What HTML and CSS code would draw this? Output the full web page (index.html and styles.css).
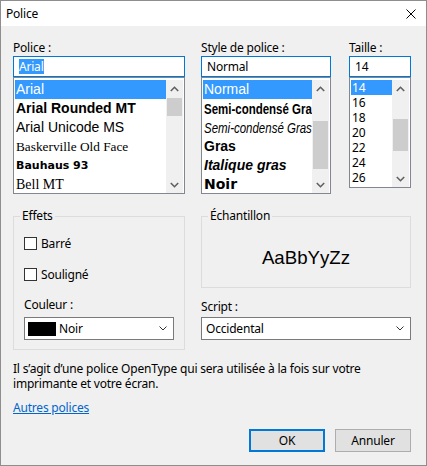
FILE: index.html
```html
<!DOCTYPE html>
<html lang="fr">
<head>
<meta charset="utf-8">
<title>Police</title>
<link rel="stylesheet" href="styles.css">
</head>
<body>
<div class="window">
  <div class="titlebar">
    <span class="title">Police</span>
    <svg class="close" width="10" height="10" viewBox="0 0 10 10"><path d="M0.5 0.5L9.5 9.5M9.5 0.5L0.5 9.5" stroke="#000" stroke-width="1" fill="none"/></svg>
  </div>
  <div class="content">
    <div class="pickers">
      <div class="col col-font">
        <div class="label">Police :</div>
        <div class="edit"><span class="sel">Arial</span></div>
        <div class="list list-font">
          <div class="items">
            <div class="item selected f-arial">Arial</div>
            <div class="item f-arial-bold">Arial Rounded MT</div>
            <div class="item f-arial">Arial Unicode MS</div>
            <div class="item f-bask">Baskerville Old Face</div>
            <div class="item f-bauhaus">Bauhaus 93</div>
            <div class="item f-bell">Bell MT</div>
          </div>
          <div class="scrollbar">
            <div class="sb-btn"><svg width="9" height="6" viewBox="0 0 9 6"><polyline points="0.8,5 4.5,1.3 8.2,5" fill="none" stroke="#606060" stroke-width="1.6"/></svg></div>
            <div class="sb-track"><div class="thumb thumb-font"></div></div>
            <div class="sb-btn"><svg width="9" height="6" viewBox="0 0 9 6"><polyline points="0.8,1 4.5,4.7 8.2,1" fill="none" stroke="#606060" stroke-width="1.6"/></svg></div>
          </div>
        </div>
      </div>
      <div class="col col-style">
        <div class="label">Style de police :</div>
        <div class="edit">Normal</div>
        <div class="list list-font">
          <div class="items">
            <div class="item selected f-arial">Normal</div>
            <div class="item"><span class="narrow f-narrow-bold">Semi-condensé Gras</span></div>
            <div class="item"><span class="narrow f-narrow-italic">Semi-condensé Gras</span></div>
            <div class="item f-arial-bold">Gras</div>
            <div class="item f-arial-bold-italic">Italique gras</div>
            <div class="item f-black">Noir</div>
          </div>
          <div class="scrollbar">
            <div class="sb-btn"><svg width="9" height="6" viewBox="0 0 9 6"><polyline points="0.8,5 4.5,1.3 8.2,5" fill="none" stroke="#606060" stroke-width="1.6"/></svg></div>
            <div class="sb-track"><div class="thumb thumb-style"></div></div>
            <div class="sb-btn"><svg width="9" height="6" viewBox="0 0 9 6"><polyline points="0.8,1 4.5,4.7 8.2,1" fill="none" stroke="#606060" stroke-width="1.6"/></svg></div>
          </div>
        </div>
      </div>
      <div class="col col-size">
        <div class="label">Taille :</div>
        <div class="edit">14</div>
        <div class="list list-size">
          <div class="items">
            <div class="item selected">14</div>
            <div class="item">16</div>
            <div class="item">18</div>
            <div class="item">20</div>
            <div class="item">22</div>
            <div class="item">24</div>
            <div class="item">26</div>
          </div>
          <div class="scrollbar">
            <div class="sb-btn"><svg width="9" height="6" viewBox="0 0 9 6"><polyline points="0.8,5 4.5,1.3 8.2,5" fill="none" stroke="#606060" stroke-width="1.6"/></svg></div>
            <div class="sb-track"><div class="thumb thumb-size"></div></div>
            <div class="sb-btn"><svg width="9" height="6" viewBox="0 0 9 6"><polyline points="0.8,1 4.5,4.7 8.2,1" fill="none" stroke="#606060" stroke-width="1.6"/></svg></div>
          </div>
        </div>
      </div>
    </div>

    <div class="lower">
      <fieldset class="group group-effects">
        <legend>Effets</legend>
        <div class="effects-body">
          <div class="check-row check-first"><span class="box"></span><span class="check-text">Barré</span></div>
          <div class="check-row check-second"><span class="box"></span><span class="check-text">Souligné</span></div>
          <div class="label-small">Couleur :</div>
          <div class="select select-color">
            <span class="swatch"></span><span class="select-text">Noir</span>
            <svg class="chev" width="8" height="5" viewBox="0 0 8 5"><polyline points="0.5,0.5 4,4 7.5,0.5" fill="none" stroke="#333" stroke-width="1"/></svg>
          </div>
        </div>
      </fieldset>
      <div class="right">
        <fieldset class="group group-sample">
          <legend>Échantillon</legend>
          <div class="sample-body"><span class="sample">AaBbYyZz</span></div>
        </fieldset>
        <div class="label-script">Script :</div>
        <div class="select select-script">
          <span class="select-text">Occidental</span>
          <svg class="chev" width="8" height="5" viewBox="0 0 8 5"><polyline points="0.5,0.5 4,4 7.5,0.5" fill="none" stroke="#333" stroke-width="1"/></svg>
        </div>
      </div>
    </div>

    <p class="info">Il s’agit d’une police OpenType qui sera utilisée à la fois sur votre<br>imprimante et votre écran.</p>
    <a class="link" href="#">Autres polices</a>

    <div class="buttons">
      <button class="btn btn-default">OK</button>
      <button class="btn">Annuler</button>
    </div>
  </div>
</div>
</body>
</html>
```

FILE: styles.css
```css
* { box-sizing: border-box; }
html, body { margin: 0; padding: 0; background: #f0f0f0; }
body {
  font-family: "Noto Sans", "Liberation Sans", sans-serif;
  font-size: 12px;
  letter-spacing: -0.2px;
  color: #000;
}
.window {
  width: 427px;
  height: 466px;
  border: 1px solid #8e8e8e;
  background: #f0f0f0;
  display: flex;
  flex-direction: column;
  overflow: hidden;
}
.titlebar {
  flex: none;
  height: 25px;
  background: #fff;
  display: flex;
  align-items: center;
  justify-content: space-between;
  padding: 0 10px 0 5px;
}
.title { line-height: 15px; }
.close { display: block; }

.content {
  flex: 1;
  padding: 14px 15px 0 12px;
  display: flex;
  flex-direction: column;
}
.pickers { display: flex; align-items: flex-start; }
.col { display: flex; flex-direction: column; flex: none; }
.col-font { width: 172px; }
.col-style { width: 130px; margin-left: 16px; }
.col-size { width: 62px; margin-left: 18px; }
.label { line-height: 15px; height: 15px; margin-bottom: 1px; white-space: nowrap; }

.edit {
  height: 21px;
  border: 1px solid #0078d7;
  background: #fff;
  padding-left: 5px;
  display: flex;
  align-items: center;
  white-space: nowrap;
  line-height: 15px;
}
.sel { background: #3399ff; color: #fff; }

.list {
  border: 1px solid #828790;
  background: #fff;
  display: flex;
  padding: 2px 1px 0 1px;
  overflow: hidden;
}
.list-font { height: 117px; }
.list-size { height: 111px; }
.items { flex: 1; min-width: 0; overflow: hidden; }
.item {
  height: 19px;
  line-height: 19px;
  padding-left: 1px;
  white-space: nowrap;
  overflow: hidden;
  font-size: 14px;
  letter-spacing: 0;
}
.item.selected { background: #3399ff; color: #fff; }
.list-size .item { height: 15px; line-height: 15px; font-size: 12px; padding-left: 1px; letter-spacing: -0.2px; }

.f-arial { font-family: "Liberation Sans", Arial, sans-serif; }
.f-arial-bold { font-family: "Liberation Sans", Arial, sans-serif; font-weight: bold; }
.f-arial-bold-italic { font-family: "Liberation Sans", Arial, sans-serif; font-weight: bold; font-style: italic; }
.f-bask { font-family: "Liberation Serif", serif; font-size: 13.3px; }
.f-bell { font-family: "Liberation Serif", serif; }
.f-bauhaus { font-family: "DejaVu Sans", sans-serif; font-weight: bold; font-size: 11px; }
.narrow { display: inline-block; transform: scaleX(0.82); transform-origin: 0 50%; }
.f-narrow-bold { font-family: "Liberation Sans", Arial, sans-serif; font-weight: bold; }
.f-narrow-italic { font-family: "Liberation Sans", Arial, sans-serif; font-style: italic; }
.f-black { font-family: "DejaVu Sans", sans-serif; font-weight: bold; font-size: 14px; }

.scrollbar {
  flex: none;
  width: 17px;
  background: #f0f0f0;
  display: flex;
  flex-direction: column;
}
.sb-btn { height: 17px; flex: none; display: flex; align-items: center; justify-content: center; }
.sb-btn svg { display: block; }
.sb-track { flex: 1; }
.thumb { background: #cdcdcd; margin: 0 1px; }
.thumb-font { margin-top: 1px; height: 18px; }
.thumb-style { margin-top: 24px; height: 48px; }
.thumb-size { margin-top: 22px; height: 32px; }

.lower { display: flex; align-items: flex-start; margin-top: 14px; }
.group {
  margin: 0;
  padding: 0;
  border: 1px solid #dcdcdc;
  min-width: 0;
}
.group legend {
  margin-left: 6px;
  padding: 0 2px;
  line-height: 16px;
  font-size: 12px;
}
.group-effects { width: 172px; flex: none; }
.effects-body { padding: 13px 0 9px 10px; }
.check-row { display: flex; align-items: center; height: 13px; }
.check-first { margin-bottom: 18px; }
.check-second { margin-bottom: 16px; }
.box { width: 13px; height: 13px; border: 1px solid #333; background: #fff; flex: none; }
.check-text { margin-left: 4px; line-height: 15px; white-space: nowrap; }
.label-small { line-height: 15px; margin-bottom: 5px; }

.select {
  height: 23px;
  border: 1px solid #7a7a7a;
  background: #fff;
  display: flex;
  align-items: center;
  line-height: 15px;
}
.select-color { width: 150px; padding-left: 3px; }
.swatch { width: 28px; height: 14px; background: #000; flex: none; }
.select-color .select-text { margin-left: 3px; }
.select-script { padding-left: 4px; }
.chev { margin-left: auto; margin-right: 6px; display: block; }

.right { width: 210px; margin-left: 16px; flex: none; display: flex; flex-direction: column; }
.sample-body {
  height: 63px;
  padding-top: 5px;
  display: flex;
  align-items: center;
  justify-content: center;
}
.sample { font-family: "Liberation Sans", Arial, sans-serif; font-size: 18.67px; letter-spacing: 0; }
.label-script { margin-top: 11px; line-height: 15px; margin-bottom: 3px; }

.info { margin: 11px 0 0 0; line-height: 15px; white-space: nowrap; }
.link {
  margin-top: 9px;
  line-height: 15px;
  color: #0066cc;
  text-decoration: underline;
  align-self: flex-start;
}
.buttons { display: flex; justify-content: flex-end; gap: 10px; margin-top: 14px; }
.btn {
  width: 76px;
  height: 23px;
  padding: 0;
  margin: 0;
  background: #e1e1e1;
  border: 1px solid #adadad;
  font-family: "Noto Sans", "Liberation Sans", sans-serif;
  font-size: 12px;
  letter-spacing: -0.2px;
  color: #000;
  line-height: 15px;
}
.btn-default { border: 2px solid #0078d7; }
```
